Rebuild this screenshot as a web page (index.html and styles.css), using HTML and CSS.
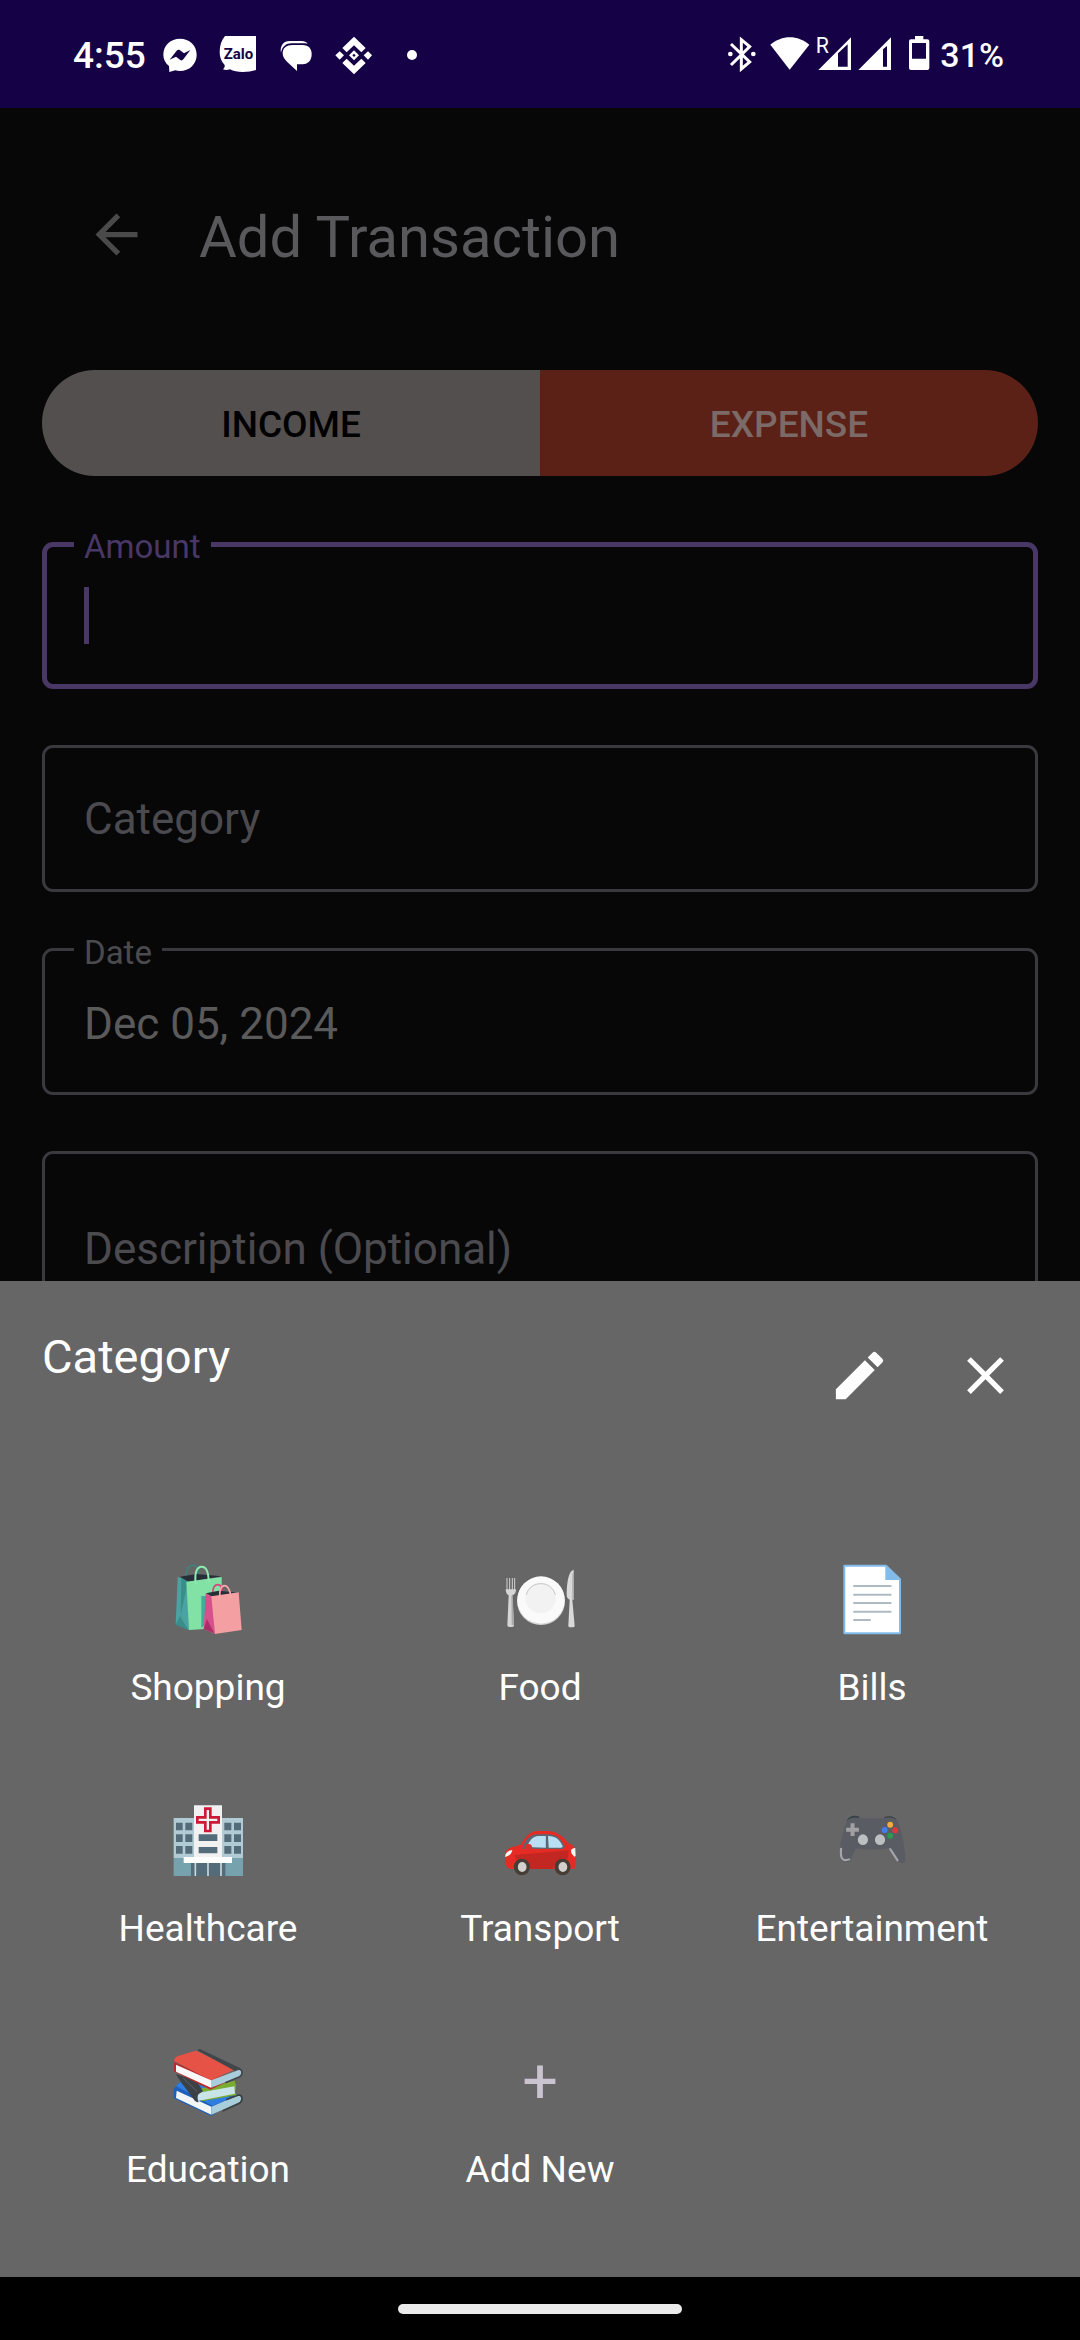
FILE: index.html
```html
<!DOCTYPE html>
<html lang="en">
<head>
<meta charset="utf-8">
<meta name="viewport" content="width=device-width, initial-scale=1">
<title>Add Transaction</title>
<link rel="stylesheet" href="styles.css">
</head>
<body>
<header class="status">
  <div class="status-left">
    <span class="status-time">4:55</span>
    <svg class="notice" viewBox="330 75 120 120" aria-hidden="true"><path fill="#fff" d="M390 86c28 0 50 20 50 48s-22 49-50 49c-5 0-10-1-14-2l-18 5-1-18c-11-9-17-20-17-34 0-28 22-48 50-48z"/><path fill="#150146" d="M359 149l21-27c3-3 7-3 10-1l12 9 19-10-21 28c-3 4-7 4-10 1l-12-9z"/></svg>
    <svg class="notice" viewBox="507 75 120 120" aria-hidden="true"><path fill="#fff" d="M528 78h93v102c-12 4-24 6-40 6-15 0-28-2-38-8-7 2-14 3-21 0 4-4 6-8 5-13-10-10-15-23-15-38 0-20 5-36 16-49z"/><text x="524" y="147" class="zalo">Zalo</text></svg>
    <svg class="notice" viewBox="678 75 120 120" aria-hidden="true"><path fill="#fff" d="M727 105h31c18 0 27 11 27 28s-10 30-27 30h-17v20l-30-28c-9-8-13-16-13-25 0-16 11-25 29-25z"/><path fill="#fff" d="M693 128c-4-21 8-35 26-35h36c8 0 14 3 18 8-4-1-9-1-14-1h-34c-17 0-29 10-32 28z"/></svg>
    <svg class="notice" viewBox="855 75 120 120" aria-hidden="true"><path fill="#fff" d="M915 80l35 34-13 13-22-21-22 21-13-13zM915 193l-35-34 13-13 22 21 22-21 13 13zM872 124l13 12-13 13-13-13zM957 124l12 12-12 13-13-13zM915 121l15 15-15 15-15-15z"/><path fill="#150146" d="M915 131l5 5-5 5-5-5z"/></svg>
    <svg class="notice" viewBox="1026 75 120 120" aria-hidden="true"><circle cx="1086" cy="135" r="15" fill="#fff"/></svg>
  </div>
  <div class="status-right">
    <svg class="bluetooth" viewBox="80 75 84 120" aria-hidden="true"><path d="M89 102l56 54-25 21V89l25 21-56 55" fill="none" stroke="#fff" stroke-width="9"/><circle cx="87" cy="132" r="7" fill="#fff"/><circle cx="156" cy="132" r="7" fill="#fff"/></svg>
    <svg class="wifi" viewBox="209 75 120 120" aria-hidden="true"><path fill="#fff" d="M210 104c34-30 83-30 117 0l-59 75z"/></svg>
    <svg class="roaming" viewBox="345 75 108 120" aria-hidden="true"><path fill="#fff" fill-rule="evenodd" d="M352 180l98-98v98zM411 130v40h29v-67z"/><text x="344" y="130" class="roam">R</text></svg>
    <svg class="signal" viewBox="468 75 102 120" aria-hidden="true"><path fill="#fff" fill-rule="evenodd" d="M469 180l98-98v98zM543 118v52h12v-62z"/></svg>
    <svg class="battery" viewBox="621 75 66 120" aria-hidden="true"><path fill="#fff" fill-rule="evenodd" d="M642 78h25v10h12q6 0 6 6v80q0 6-6 6h-49q-6 0-6-6V94q0-6 6-6h12zM633 99v47h42V99z"/></svg>
    <span class="status-level">31%</span>
  </div>
</header>

<main class="screen">
  <div class="toolbar">
    <button class="icon-button" type="button" aria-label="Back"><svg class="icon" viewBox="0 0 24 24" fill="#4a4a4a"><path d="M20 11H7.83l5.59-5.59L12 4l-8 8 8 8 1.41-1.41L7.83 13H20z"/></svg></button>
    <h1 class="toolbar-title">Add Transaction</h1>
  </div>
  <form class="form">
    <div class="segments">
      <button class="segment segment-income" type="button">INCOME</button>
      <button class="segment segment-expense" type="button">EXPENSE</button>
    </div>
    <div class="field field-active">
      <label class="field-label field-label-raised" for="amount">Amount</label>
      <input class="field-input" id="amount" type="text" inputmode="decimal">
      <span class="caret"></span>
    </div>
    <div class="field">
      <label class="field-label" for="category">Category</label>
      <input class="field-input" id="category" type="text" readonly>
    </div>
    <div class="field">
      <label class="field-label field-label-raised" for="date">Date</label>
      <input class="field-input" id="date" type="text" value="Dec 05, 2024">
    </div>
    <div class="field field-tall">
      <label class="field-label" for="description">Description (Optional)</label>
      <textarea class="field-input" id="description"></textarea>
    </div>
  </form>
</main>

<div class="overlay">
  <section class="sheet" aria-labelledby="sheet-title">
    <div class="sheet-head">
      <h2 class="sheet-title" id="sheet-title">Category</h2>
      <button class="icon-button" type="button" aria-label="Edit categories"><svg class="icon" viewBox="0 0 24 24" fill="#fff"><path d="M3 17.25V21h3.75L17.81 9.94l-3.75-3.75zM20.71 7.04a1 1 0 0 0 0-1.41l-2.34-2.34a1 1 0 0 0-1.41 0l-1.83 1.83 3.75 3.75z"/></svg></button>
      <button class="icon-button" type="button" aria-label="Close"><svg class="icon" viewBox="0 0 24 24" fill="#fff"><path d="M19 6.41L17.59 5 12 10.59 6.41 5 5 6.41 10.59 12 5 17.59 6.41 19 12 13.41 17.59 19 19 17.59 13.41 12z"/></svg></button>
    </div>
    <div class="tiles">
      <button class="tile" type="button">
        <svg class="tile-icon" viewBox="204 60 240 240" aria-hidden="true">
          <path d="M257 110q2-32 22-35 15 0 19 30" fill="none" stroke="#3d8380" stroke-width="5"/>
          <path fill="#4aa3a0" d="M233 111l32 10 2 149-40-16z"/><path fill="#2c7c7a" d="M240 228l25 42-38-16zM244 113l20 8-22 105z" opacity=".55"/>
          <path fill="#262f38" d="M240 110l50-8 75 7-100 16z"/>
          <path fill="#82e2a5" d="M259 125l106-14v120l-52 36-46 3z"/><path fill="#3fae9c" d="M304 168h30v70l-30 26z"/>
          <path d="M287 131c-4-34 4-51 18-51s21 18 21 47" fill="none" stroke="#8debb0" stroke-width="6"/>
          <path d="M338 161c0-20 6-27 16-27s12 12 12 22" fill="none" stroke="#d9437f" stroke-width="5"/>
          <path fill="#d6508c" d="M317 160l20 8 8 114-34-15z"/><path fill="#a82e68" d="M321 237l21 42-31-12z"/>
          <path fill="#262f38" d="M318 160l38-8 60 6-75 14z"/>
          <path fill="#f49fa2" d="M334 169l82-12 9 113-80 12z"/>
          <path d="M360 178c-3-28 3-41 14-41s16 13 20 37" fill="none" stroke="#f9a7aa" stroke-width="5"/>
        </svg>
        <span class="tile-label">Shopping</span>
      </button>
      <button class="tile" type="button">
        <svg class="tile-icon" viewBox="210 60 240 240" aria-hidden="true">
          <path d="M231 114v36q11 10 23 0v-36M239 114v38M247 114v38" fill="none" stroke="#d2d2d2" stroke-width="3"/>
          <path fill="#d5d5d5" d="M227 148h31q0 15-11 18l5 90q0 5-6 5h-8q-6 0-6-5l4-90q-9-4-9-18z"/><path fill="#a9a9a9" d="M244 167h4l4 88h-7z"/>
          <path fill="#d9d9d9" d="M431 89v90h-4l7 79q0 4-6 4h-8q-5 0-5-5l4-78q-10-3-9-19c1-33 5-67 21-71z"/><path fill="#aaa" d="M427 100h4v79h-4z"/>
          <circle cx="333" cy="183" r="72" fill="#d4d4d4"/><circle cx="333" cy="180" r="71" fill="#fafafa"/><circle cx="332" cy="174" r="46" fill="#f2f2f3"/><path d="M289 164c12-44 75-44 87 0" fill="none" stroke="#c7c7c7" stroke-width="3"/>
        </svg>
        <span class="tile-label">Food</span>
      </button>
      <button class="tile" type="button">
        <svg class="tile-icon" viewBox="1206 60 240 240" aria-hidden="true">
          <path fill="#fff" stroke="#82bcea" stroke-width="6" stroke-linejoin="round" d="M1243 77h125l42 41v162h-167z"/><path fill="#82bcea" d="M1366 75l47 45h-47z"/>
          <path d="M1272 138h110M1272 164h110M1272 189h110M1272 215h110M1272 240h48" stroke="#aebbc2" stroke-width="6" stroke-linecap="round"/>
        </svg>
        <span class="tile-label">Bills</span>
      </button>
      <button class="tile" type="button">
        <svg class="tile-icon" viewBox="204 63 240 240" aria-hidden="true">
          <path fill="#b0cbd3" d="M221 114h208v120H221z"/><path fill="#76a2ae" d="M221 234h208v54H221z"/>
          <path fill="#546b79" d="M228 128h20v23h-20zM256 128h21v23h-21zM228 163h20v23h-20zM256 163h21v23h-21zM228 198h20v23h-20zM256 198h21v23h-21zM373 128h21v23h-21zM402 128h21v23h-21zM373 163h21v23h-21zM402 163h21v23h-21zM373 198h21v23h-21zM402 198h21v23h-21zM273 249h103v39H273z"/>
          <path fill="#f1f1f1" d="M282 76h84v156h-84z"/><path fill="#546b79" d="M296 163h56v20h-56zM296 201h56v19h-56z"/>
          <path fill="none" stroke="#cf1736" stroke-width="8" d="M316 86h15v26h25v15h-25v26h-15v-26h-24v-15h24z"/>
          <path fill="#fff" d="M251 231h145v18H251z"/><path d="M286 249v39M324 249v39M363 249v39" stroke="#c8d7dc" stroke-width="5"/>
        </svg>
        <span class="tile-label">Healthcare</span>
      </button>
      <button class="tile" type="button">
        <svg class="tile-icon" viewBox="192 63 220 240" preserveAspectRatio="none" aria-hidden="true">
          <path fill="#e62b24" d="M206 224c0-9 9-20 17-22l27-8c8-20 25-41 45-41h28c25 0 44 17 57 37 13 4 18 14 20 25l-1 44q0 8-9 8H222c-12-3-16-12-16-20z"/>
          <path fill="#c22722" d="M232 225l150-14-6 35c-25-14-35 4-38 21h-65c-1-20-17-30-35-26z"/>
          <path fill="#5c6670" d="M253 206c7-24 19-43 43-43h28c25 0 36 16 46 36-1 5-4 8-9 8z"/>
          <path fill="#b9dff5" d="M266 201c7-18 15-33 32-33h20v35zM324 168c22 0 31 11 40 29q2 5-4 6h-34z"/>
          <ellipse cx="270" cy="202" rx="10" ry="10" fill="#d82f2a"/><path fill="#f5f5f5" d="M206 231c0-12 7-20 20-21-2 12-9 18-20 21zM399 204c-15 0-15 14-3 26l4-2z"/>
          <ellipse cx="252" cy="261" rx="22" ry="25" fill="#463d37"/><ellipse cx="364" cy="261" rx="22" ry="25" fill="#463d37"/><ellipse cx="253" cy="261" rx="12" ry="15" fill="#d4d0cd"/><ellipse cx="365" cy="261" rx="12" ry="15" fill="#d4d0cd"/>
        </svg>
        <span class="tile-label">Transport</span>
      </button>
      <button class="tile" type="button">
        <svg class="tile-icon" viewBox="1106 63 220 240" preserveAspectRatio="none" aria-hidden="true">
          <path fill="#394048" d="M1147 124c3-17 24-20 35-13l-3 14zM1249 112c13-7 32-4 37 13l-30 4z"/>
          <path fill="#595d63" d="M1150 119c12-8 24-8 33-4h66c14-5 26-3 36 6 14 30 25 95 22 124q-10 11-20-3l-24-37c-31 6-62 6-91 0l-17 37q-14 11-27-4c-3-40 7-90 22-119z"/>
          <path fill="none" stroke="#a5a5ab" stroke-width="6" stroke-linecap="round" d="M1131 206c-2 24 0 41 22 32M1266 207l20 34"/>
          <path fill="#a1a1a4" d="M1157 130h11v13h12v12h-12v13h-11v-13h-12v-12h12z"/>
          <ellipse cx="1191" cy="179" rx="14" ry="16" fill="#bebfc3"/><ellipse cx="1238" cy="179" rx="14" ry="16" fill="#bebfc3"/>
          <ellipse cx="1266" cy="134" rx="8" ry="9" fill="#f5ac38"/><ellipse cx="1251" cy="150" rx="8" ry="9" fill="#3f80ee"/><ellipse cx="1280" cy="151" rx="8" ry="9" fill="#e3363a"/><ellipse cx="1266" cy="167" rx="8" ry="9" fill="#299b4f"/>
        </svg>
        <span class="tile-label">Entertainment</span>
      </button>
      <button class="tile" type="button">
        <svg class="tile-icon" viewBox="204 66 240 240" aria-hidden="true">
          <path fill="#1e5fba" d="M222 206l18-20 182 40-88 62-113-53z"/><path fill="#2f7de1" d="M228 198l14-13 100 20 50 30-55 22z"/>
          <path fill="#f3f6f7" d="M230 212l104 48v24l-106-50z"/><path fill="#a9cedb" d="M334 260l80-34q10 2 10 12-2 8-10 11l-80 35z"/><path fill="none" stroke="#3b4044" stroke-width="5" d="M378 239l38-14c13 0 13 18 2 25l-50 23"/>
          <path fill="#78ad31" d="M300 206l104-24 4 15-3 22 6 6-106 19z"/><path fill="#c8e4e6" d="M292 219l111-20 2 22-112 22z"/>
          <path fill="#3c4146" d="M228 162l62 22 19 30-13 8q-8 10 0 24-8 2-13-5c-18-28-43-55-55-79z"/><path d="M250 175l42 40" stroke="#5c6165" stroke-width="3"/>
          <path fill="#ba292b" d="M222 126l110 50 92-24-30 27-63 30-109-55z"/><path fill="#e65245" d="M222 123q1-11 12-15l47-14q9-2 16 2l106 53-71 32z"/>
          <path fill="#f8f8f8" d="M228 134l105 47v22l-105-48z"/><path fill="#a9cedb" d="M333 181l83-31q10 1 9 11-2 8-10 11l-82 31z"/>
          <path fill="#41464a" d="M292 91q5-7 14-1l116 55-17 8z"/><path fill="none" stroke="#41464a" stroke-width="5" d="M410 148c18-6 20 15 9 22l-43 18"/>
        </svg>
        <span class="tile-label">Education</span>
      </button>
      <button class="tile" type="button">
        <span class="tile-plus">+</span>
        <span class="tile-label">Add New</span>
      </button>
    </div>
  </section>
  <div class="navbar"><span class="pill"></span></div>
</div>
</body>
</html>
```
FILE: styles.css
```css
* { box-sizing: border-box; }

body {
  margin: 0;
  min-height: 100vh;
  background: #070708;
  color: #fff;
  font-family: Roboto, "Liberation Sans", sans-serif;
  overflow: hidden;
}

button {
  margin: 0;
  padding: 0;
  border: 0;
  background: none;
  color: inherit;
  font: inherit;
}

svg { display: block; overflow: visible; }

/* System status bar */
.status {
  display: flex;
  justify-content: space-between;
  align-items: center;
  height: 108px;
  padding: 2px 76px 0 73px;
  background: #150146;
  font-size: 36px;
  font-weight: 500;
}
.status-left { display: flex; align-items: center; gap: 18px; }
.status-right { display: flex; align-items: center; gap: 6px; }
.status-time { font-size: 37px; margin-right: -4px; }
.notice { width: 40px; height: 40px; }
.bluetooth { width: 28px; height: 40px; margin-right: 8px; }
.wifi { width: 40px; height: 40px; }
.roaming { width: 36px; height: 40px; }
.signal { width: 34px; height: 40px; }
.battery { width: 22px; height: 40px; margin: 0 4px 0 10px; }
.status-level { font-size: 34px; }
.zalo { font-size: 45px; font-weight: 700; fill: #150146; }
.roam { font-size: 64px; font-weight: 400; fill: #fff; }

/* Screen behind the sheet */
.toolbar {
  display: flex;
  align-items: center;
  gap: 20px;
  padding: 63px 42px 73px 53px;
}
.toolbar-title {
  margin: 0;
  padding-top: 6px;
  color: #59585b;
  font-size: 58px;
  font-weight: 400;
}
.icon-button {
  display: grid;
  place-items: center;
  flex: none;
  width: 126px;
  height: 126px;
}
.icon { width: 63px; height: 63px; }

.form {
  display: flex;
  flex-direction: column;
  gap: 56px;
  padding: 0 42px;
}
.segments {
  display: grid;
  grid-template-columns: 1fr 1fr;
  height: 106px;
  margin-bottom: 10px;
  border-radius: 53px;
  overflow: hidden;
  font-size: 37px;
}
.segment { padding-top: 2px; font-weight: 500; }
.segment-income { background: #524f4e; color: #000; }
.segment-expense { background: #5b2117; color: #7b6a67; }

.field {
  display: grid;
  align-items: center;
  height: 147px;
  border: 3px solid #3a393d;
  border-radius: 11px;
  font-size: 44px;
}
.field > * { grid-area: 1 / 1; }
.field-active { border: 5px solid #493765; }
.field-tall { height: 196px; }
.field-label {
  justify-self: start;
  padding: 0 39px;
  color: #4b4a4e;
}
.field-label-raised {
  align-self: start;
  margin: -18px 0 0 29px;
  padding: 0 10px;
  background: #070708;
  font-size: 33px;
  line-height: 40px;
  z-index: 1;
}
.field-active .field-label-raised { margin: -20px 0 0 27px; color: #493765; }
.field-input {
  width: 100%;
  height: 100%;
  padding: 4px 39px 0;
  border: 0;
  outline: 0;
  background: none;
  color: #5a5a5b;
  font: inherit;
  resize: none;
}
.caret {
  width: 5px;
  height: 57px;
  margin-left: 37px;
  background: #493765;
}

/* Category sheet */
.overlay { position: fixed; right: 0; bottom: 0; left: 0; z-index: 2; }
.sheet { padding-bottom: 40px; background: #666; }
.sheet-head {
  display: flex;
  align-items: flex-start;
  padding: 31px 32px 76px 42px;
}
.sheet-title {
  flex: 1;
  margin: 0;
  padding-top: 17px;
  font-size: 47px;
  font-weight: 400;
}
.tiles {
  display: grid;
  grid-template-columns: repeat(3, 1fr);
  padding: 0 42px;
}
.tile {
  display: flex;
  flex-direction: column;
  align-items: center;
  gap: 26px;
  padding: 46px 0;
}
.tile-icon { width: 80px; height: 80px; }
.tile-plus { color: #cac4d0; font-size: 63px; line-height: 80px; }
.tile-label { font-size: 37px; line-height: 43px; }

.navbar {
  display: grid;
  place-items: center;
  height: 63px;
  background: #000;
}
.pill { width: 284px; height: 10px; border-radius: 5px; background: #ebebeb; }
```
